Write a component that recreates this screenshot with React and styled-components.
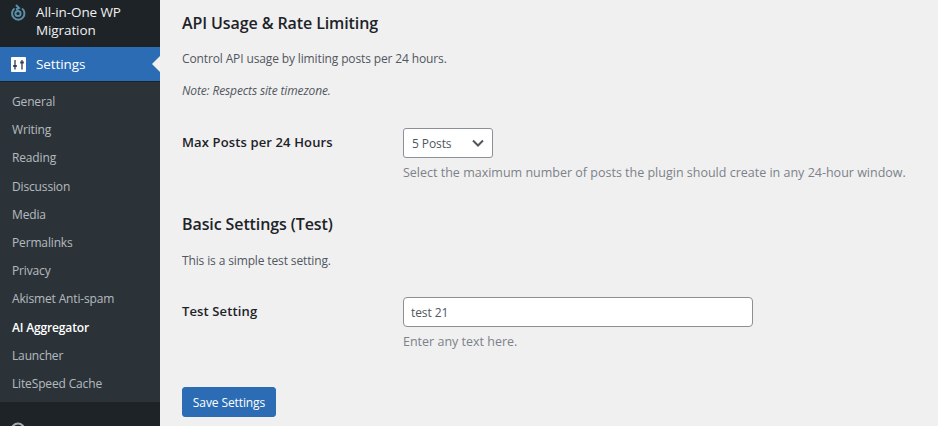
import React from "react";
import styled, { createGlobalStyle } from "styled-components";

const GlobalStyle = createGlobalStyle`
  html, body {
    margin: 0;
    height: 100%;
    overflow: hidden;
    background: #f0f0f1;
  }
  body {
    font-family: "Open Sans", "Noto Sans", "Liberation Sans", sans-serif;
    font-size: 13px;
    color: #50575e;
  }
`;

const Page = styled.div`
  display: flex;
  width: 938px;
  height: 426px;
  overflow: hidden;
`;

const Sidebar = styled.aside`
  flex: 0 0 160px;
  display: flex;
  flex-direction: column;
  background: #1d2327;
  color: #f0f0f1;
`;

const TopItem = styled.div`
  flex: 0 0 47px;
  box-sizing: border-box;
  display: flex;
  align-items: flex-start;
  gap: 10px;
  padding: 4px 0 0 10px;
  font-size: 13.5px;
  line-height: 17.5px;
  letter-spacing: -0.1px;
`;

const ActiveItem = styled.div`
  position: relative;
  flex: 0 0 34px;
  box-sizing: border-box;
  display: flex;
  align-items: center;
  gap: 10px;
  padding-left: 11px;
  background: #2b6cb5;
  color: #fff;
  font-size: 13.5px;
  letter-spacing: -0.1px;
  &::after {
    content: "";
    position: absolute;
    right: 0;
    top: 9px;
    border: 8px solid transparent;
    border-right-color: #f0f0f1;
    border-left-width: 0;
  }
`;

const SubMenu = styled.ul`
  flex: 0 0 auto;
  list-style: none;
  margin: 1px 0 0;
  padding: 6px 0 4px;
  background: #2c3338;
`;

const SubItem = styled.li`
  height: 28.2px;
  line-height: 28.2px;
  padding-left: 12px;
  font-size: 12px;
  letter-spacing: -0.15px;
  white-space: nowrap;
  color: ${(p) => (p.$current ? "#fff" : "rgba(240, 246, 252, 0.7)")};
  font-weight: ${(p) => (p.$current ? 600 : 400)};
`;

const Collapsed = styled.div`
  flex: 1;
  padding: 20px 0 0 10px;
`;

const Main = styled.main`
  flex: 1;
  padding: 12px 0 0 22px;
  min-width: 0;
`;

const Heading = styled.h2`
  margin: ${(p) => p.$top || 0}px 0 0;
  font-size: 16px;
  line-height: 22px;
  font-weight: 600;
  color: #1d2327;
  letter-spacing: -0.1px;
`;

const Intro = styled.p`
  margin: ${(p) => p.$top}px 0 0;
  font-size: 12px;
  line-height: 18px;
  letter-spacing: -0.13px;
  font-style: ${(p) => (p.$note ? "italic" : "normal")};
`;

const Row = styled.div`
  display: flex;
  margin-top: ${(p) => p.$top}px;
`;

const Label = styled.label`
  flex: 0 0 221px;
  padding-top: 5px;
  font-size: 13px;
  line-height: 18px;
  font-weight: 600;
  color: #1d2327;
  letter-spacing: 0.13px;
`;

const Field = styled.div`
  display: flex;
  flex-direction: column;
  align-items: flex-start;
  min-width: 0;
`;

const SelectBox = styled.div`
  width: 90px;
  height: 30px;
  box-sizing: border-box;
  display: flex;
  align-items: center;
  justify-content: space-between;
  padding: 0 7px 0 8px;
  background: #fff;
  border: 1px solid #8c8f94;
  border-radius: 3px;
  font-size: 12px;
  letter-spacing: -0.1px;
`;

const TextInput = styled.input`
  width: 350px;
  height: 30px;
  box-sizing: border-box;
  padding: 0 7px;
  background: #fff;
  border: 1px solid #8c8f94;
  border-radius: 4px;
  font: inherit;
  font-size: 12px;
  letter-spacing: -0.1px;
  color: #50575e;
`;

const Hint = styled.p`
  margin: 6px 0 0;
  font-size: 12.5px;
  line-height: 18px;
  white-space: nowrap;
  color: #7c8288;
`;

const SaveButton = styled.button`
  display: block;
  width: 94px;
  height: 30px;
  margin-top: 36px;
  padding: 0;
  background: #2b6cb5;
  border: 1px solid #2b6cb5;
  border-radius: 3px;
  color: #fff;
  font: inherit;
  font-size: 12px;
  letter-spacing: -0.1px;
`;

const MigrationIcon = () => (
  <svg width="16" height="18" viewBox="0 0 16 18" fill="none" stroke="#5a8fa8" strokeWidth="2">
    <path d="M4.5 4.5a6.2 6.2 0 1 0 7.5 0" />
    <circle cx="8" cy="9.5" r="2.6" />
    <path d="M6 1l3 3-3 1.5" />
  </svg>
);

const SettingsIcon = () => (
  <svg width="15" height="15" viewBox="0 0 15 15">
    <rect width="15" height="15" rx="1" fill="#fff" />
    <path d="M4 3v9.5M11 3v9.5" stroke="#2d3f55" strokeWidth="1.3" />
    <path d="M2.2 9h3.6M9.2 5.5h3.6" stroke="#2d3f55" strokeWidth="1.8" />
  </svg>
);

const Chevron = () => (
  <svg width="14" height="14" viewBox="0 0 14 14" fill="none" stroke="#50575e" strokeWidth="2">
    <path d="M2 4.5l5 5 5-5" />
  </svg>
);

const PeekIcon = () => (
  <svg width="16" height="16" viewBox="0 0 16 16" fill="none" stroke="#a7aaad" strokeWidth="2">
    <circle cx="8" cy="8" r="6.5" />
  </svg>
);

const links = ["General", "Writing", "Reading", "Discussion", "Media", "Permalinks", "Privacy", "Akismet Anti-spam", "AI Aggregator", "Launcher", "LiteSpeed Cache"];

export default function App() {
  return (
    <Page>
      <GlobalStyle />
      <Sidebar>
        <TopItem>
          <MigrationIcon />
          <span>All-in-One WP<br />Migration</span>
        </TopItem>
        <ActiveItem>
          <SettingsIcon />
          Settings
        </ActiveItem>
        <SubMenu>
          {links.map((link) => (
            <SubItem key={link} $current={link === "AI Aggregator"}>{link}</SubItem>
          ))}
        </SubMenu>
        <Collapsed><PeekIcon /></Collapsed>
      </Sidebar>
      <Main>
        <Heading>API Usage &amp; Rate Limiting</Heading>
        <Intro $top={16}>Control API usage by limiting posts per 24 hours.</Intro>
        <Intro $top={14} $note>Note: Respects site timezone.</Intro>
        <Row $top={28}>
          <Label>Max Posts per 24 Hours</Label>
          <Field>
            <SelectBox>5 Posts <Chevron /></SelectBox>
            <Hint>Select the maximum number of posts the plugin should create in any 24-hour window.</Hint>
          </Field>
        </Row>
        <Heading $top={31}>Basic Settings (Test)</Heading>
        <Intro $top={17}>This is a simple test setting.</Intro>
        <Row $top={27}>
          <Label>Test Setting</Label>
          <Field>
            <TextInput defaultValue="test 21" />
            <Hint>Enter any text here.</Hint>
          </Field>
        </Row>
        <SaveButton>Save Settings</SaveButton>
      </Main>
    </Page>
  );
}
